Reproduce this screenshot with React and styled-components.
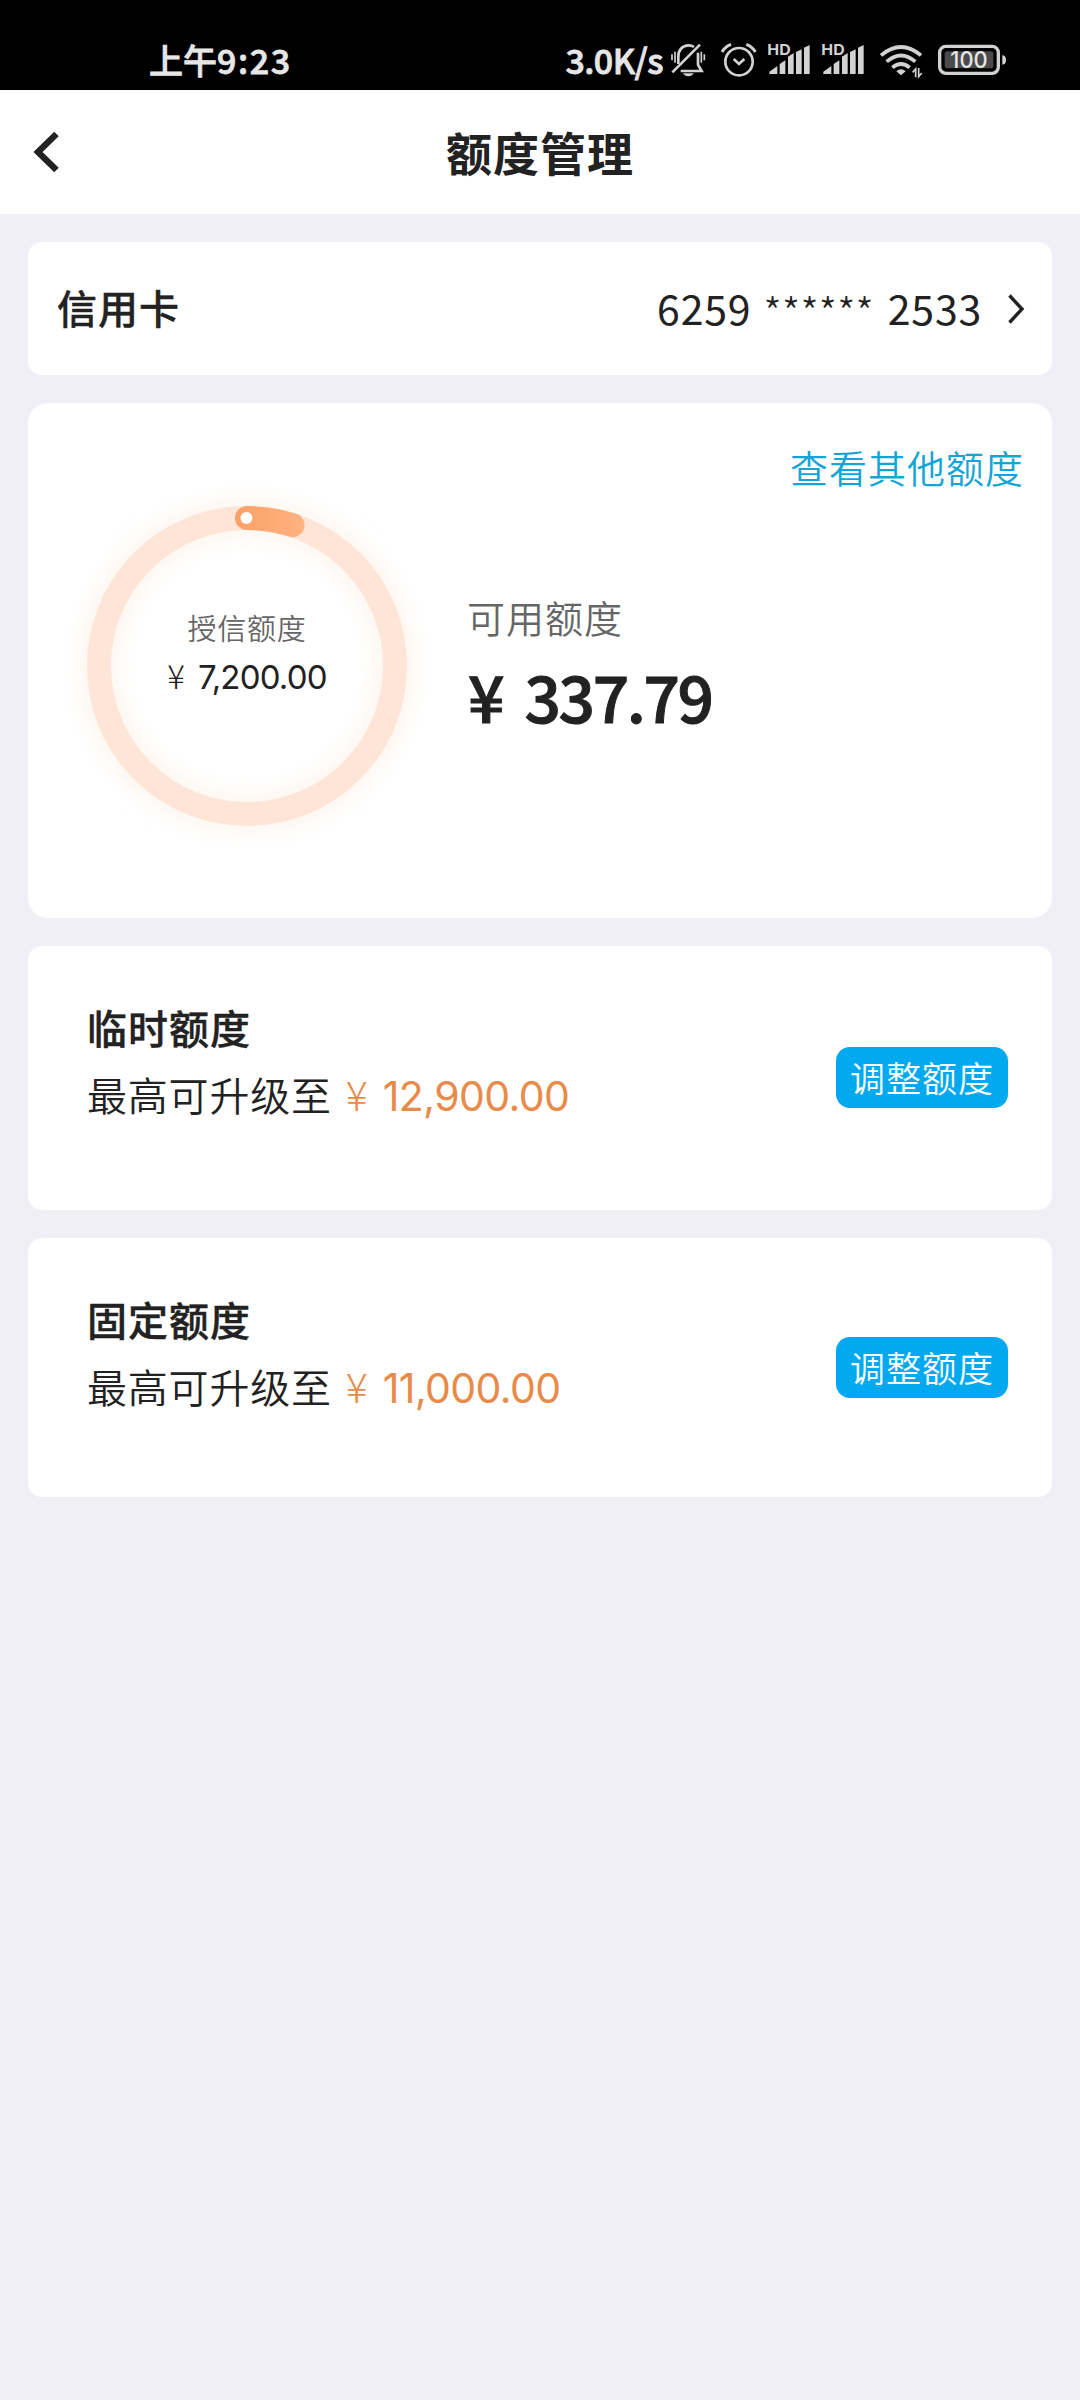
import React from 'react';
import styled, { createGlobalStyle } from 'styled-components';

const CJK = '"Noto Sans CJK SC", sans-serif';
const LATIN = 'Inter, "Noto Sans CJK SC", sans-serif';

const GlobalStyle = createGlobalStyle`
  *, *::before, *::after { box-sizing: border-box; }
  body { margin: 0; background: #efeff5; font-family: ${CJK}; color: #222; }
`;

const Screen = styled.div`
  width: 1080px;
  min-height: 2400px;
  background: #efeff5;
  display: flex;
  flex-direction: column;
`;

const StatusBar = styled.div`
  height: 90px;
  background: #000;
  color: #e6e6e6;
  display: flex;
  align-items: flex-start;
  justify-content: space-between;
  padding: 40px 74px 0 149px;
`;

const StatusText = styled.span`
  font-family: ${CJK};
  font-weight: 500;
  font-size: 34px;
  line-height: 39px;
  letter-spacing: ${(p) => p.$spacing || 0}px;
  -webkit-text-stroke: 0.8px currentColor;
  white-space: nowrap;
`;

const StatusTime = styled.div`
  display: flex;
`;

const StatusIcons = styled.div`
  display: flex;
  align-items: flex-start;
`;

const StatusIcon = styled.svg`
  display: block;
  flex: none;
  height: 40px;
  margin-left: ${(p) => p.$gap}px;
  overflow: visible;
`;

const NavBar = styled.header`
  height: 124px;
  background: #fff;
  display: grid;
  grid-template-columns: 120px 1fr 120px;
  align-items: center;
`;

const BackButton = styled.button`
  border: 0;
  background: none;
  padding: 0 0 0 30px;
  display: flex;
`;

const Title = styled.h1`
  margin: 0;
  font-size: 46px;
  line-height: 60px;
  font-weight: 700;
  letter-spacing: 1px;
  text-align: center;
  padding-bottom: 2px;
`;

const Content = styled.main`
  display: flex;
  flex-direction: column;
  gap: 28px;
  padding: 28px;
`;

const Card = styled.section`
  background: #fff;
  border-radius: ${(p) => p.$radius || 14}px;
  height: ${(p) => p.$height}px;
`;

const CardRow = styled(Card)`
  display: flex;
  align-items: center;
  justify-content: space-between;
  padding: 0 27px 3px 29px;
`;

const Label = styled.div`
  font-size: 40px;
  line-height: 56px;
  font-weight: 500;
  letter-spacing: 1px;
  -webkit-text-stroke: 0.4px currentColor;
`;

const CardNumber = styled.div`
  display: flex;
  align-items: center;
  font-size: 41px;
  line-height: 56px;
  font-weight: 400;
  white-space: nowrap;
`;

const Digits = styled.span`
  letter-spacing: 0.8px;
`;

const Mask = styled.span`
  font-size: 42px;
  font-weight: 300;
  letter-spacing: -0.2px;
  margin: 8px 14px 0 12px;
`;

const Chevron = styled.svg`
  display: block;
  margin: 3px 0 0 25px;
`;

const SummaryCard = styled(Card)`
  display: flex;
  flex-direction: column;
  padding: 36px 29px 0;
`;

const OtherLink = styled.a`
  align-self: flex-end;
  font-size: 38px;
  line-height: 56px;
  font-weight: 350;
  letter-spacing: 1px;
  margin-right: -1px;
  color: #14a5d6;
`;

const SummaryBody = styled.div`
  display: flex;
  margin-top: -19px;
`;

const Gauge = styled.div`
  width: 380px;
  height: 380px;
  display: grid;
  flex: none;
  & > * { grid-area: 1 / 1; }
`;

const GaugeText = styled.div`
  display: flex;
  flex-direction: column;
  align-items: center;
  padding-top: 130px;
`;

const GaugeLabel = styled.div`
  font-size: 29px;
  line-height: 42px;
  font-weight: 350;
  letter-spacing: 0.8px;
  color: #666;
`;

const GaugeAmount = styled.div`
  font-family: ${LATIN};
  font-size: 33px;
  line-height: 44px;
  font-weight: 400;
  letter-spacing: -0.8px;
  margin-top: 5px;
  display: flex;
  align-items: baseline;
`;

const Yen = styled.span`
  font-family: ${CJK};
  font-weight: ${(p) => p.$weight || 300};
  letter-spacing: 0;
  margin-right: ${(p) => p.$gap}px;
`;

const Available = styled.div`
  display: flex;
  flex-direction: column;
  padding: 113px 0 0 31px;
`;

const AvailableLabel = styled.div`
  font-size: 38px;
  line-height: 56px;
  font-weight: 350;
  letter-spacing: 1px;
  color: #666;
  margin-left: -1px;
`;

const AvailableAmount = styled.div`
  font-size: 64px;
  line-height: 76px;
  font-weight: 500;
  letter-spacing: -2.4px;
  -webkit-text-stroke: 1px currentColor;
  margin-top: 12px;
  display: flex;
  align-items: baseline;
`;

const QuotaCard = styled(Card)`
  display: flex;
  justify-content: space-between;
  align-items: flex-start;
  padding: 0 44px 0 59px;
`;

const QuotaInfo = styled.div`
  padding-top: 53px;
`;

const QuotaLine = styled.div`
  display: flex;
  align-items: baseline;
  margin-top: 10px;
  font-size: 40px;
  line-height: 56px;
  font-weight: 350;
  letter-spacing: 0.8px;
  white-space: nowrap;
`;

const QuotaAmount = styled.span`
  display: flex;
  align-items: baseline;
  font-family: ${LATIN};
  font-size: 41px;
  font-weight: 400;
  letter-spacing: -0.6px;
  color: #e88a48;
  margin-left: 14px;
`;

const AdjustButton = styled.button`
  border: 0;
  width: 172px;
  height: 61px;
  padding: 0;
  margin-top: ${(p) => p.$top}px;
  border-radius: 14px;
  background: #03a9f0;
  color: #fff;
  font-family: ${CJK};
  font-size: 35px;
  line-height: 56px;
  padding-bottom: 2px;
  font-weight: 350;
  letter-spacing: 1px;
  white-space: nowrap;
`;

const ICON = '#d2d2d2';

function BellOffIcon() {
  return (
    <StatusIcon $gap={8} width="34" viewBox="393 60 102 120" fill="none" stroke={ICON} strokeWidth="8">
      <path d="M415 132V110C415 90 427 76 446 76C453 76 458 78 462 81" />
      <path d="M474 98V134L485 153H422" />
      <path d="M397 157L480 74" strokeWidth="8" />
      <path d="M429 160H461Q456 169 445 169Q434 169 429 160Z" fill={ICON} stroke="none" />
      <path d="M405 95V128M396 103V121M484 95V128M493 103V121" strokeWidth="5" />
    </StatusIcon>
  );
}

function AlarmIcon() {
  return (
    <StatusIcon $gap={16} width="35" viewBox="543 60 105 120" fill="none" stroke={ICON} strokeWidth="8">
      <circle cx="597" cy="125" r="41" />
      <path d="M581 117L597 132L613 117" />
      <path d="M546 96Q554 81 573 73M646 96Q638 81 619 73" strokeWidth="9" />
    </StatusIcon>
  );
}

function SignalIcon({ gap }) {
  return (
    <StatusIcon $gap={gap} width="42" viewBox="686 60 126 120" fill={ICON}>
      <text x="684" y="105" fontFamily="Inter, sans-serif" fontWeight="700" fontSize="45" textLength="70" lengthAdjust="spacingAndGlyphs">HD</text>
      <path d="M690 162V155L714 138V162ZM721 162V132L738 121V162ZM746 162V110L763 99V162ZM770 162V96L787 88V162ZM794 162V83L811 75V162Z" />
    </StatusIcon>
  );
}

function WifiIcon() {
  return (
    <StatusIcon $gap={16} width="42" viewBox="1020 60 126 120" fill="none" stroke={ICON} strokeWidth="11">
      <path d="M1023 106Q1083 56 1143 106" />
      <path d="M1040 125Q1083 88 1126 125" />
      <path d="M1057 143Q1083 121 1109 143" />
      <path d="M1083 166L1069 154Q1083 142 1097 154Z" fill={ICON} stroke="none" />
      <path d="M1127 172V147L1118 157M1136 144V170L1145 159" strokeWidth="5" />
    </StatusIcon>
  );
}

function BatteryIcon() {
  return (
    <StatusIcon $gap={16} width="68" viewBox="1194 60 204 120">
      <rect x="1199" y="79" width="176" height="81" rx="19" fill="none" stroke={ICON} strokeWidth="10" />
      <rect x="1214" y="94" width="146" height="51" rx="8" fill="#4a4a4a" />
      <path d="M1387 106Q1398 106 1398 120Q1398 134 1387 134Z" fill={ICON} />
      <text x="1287" y="145" textAnchor="middle" fontFamily="Inter, sans-serif" fontWeight="500" fontSize="68" textLength="112" lengthAdjust="spacingAndGlyphs" fill="#e6e6e6">100</text>
    </StatusIcon>
  );
}

function QuotaGauge({ available, total }) {
  const c = 190;
  const r = 148;
  const angle = (available / total) * Math.PI * 2 + 0.018;
  const x = c + r * Math.sin(angle);
  const y = c - r * Math.cos(angle);
  return (
    <svg width="380" height="380" viewBox="0 0 380 380" fill="none">
      <defs>
        <linearGradient id="arc" x1="178" y1="0" x2="248" y2="0" gradientUnits="userSpaceOnUse">
          <stop offset="0" stopColor="#fba168" />
          <stop offset="1" stopColor="#ffb281" />
        </linearGradient>
        <filter id="glow" x="-20%" y="-20%" width="140%" height="140%">
          <feGaussianBlur stdDeviation="10" />
        </filter>
      </defs>
      <circle cx={c} cy={c} r={r} stroke="#ffeedd" strokeOpacity="0.5" strokeWidth="38" filter="url(#glow)" />
      <circle cx={c} cy={c} r={r} stroke="#ffe5d8" strokeWidth="24" />
      <path d={`M${c} ${c - r}A${r} ${r} 0 0 1 ${x} ${y}`} stroke="url(#arc)" strokeWidth="24" strokeLinecap="round" />
      <circle cx={c - 0.5} cy={c - r} r="6" fill="#fff" />
    </svg>
  );
}

function Quota({ name, amount, height, top }) {
  return (
    <QuotaCard $height={height}>
      <QuotaInfo>
        <Label>{name}</Label>
        <QuotaLine>
          最高可升级至
          <QuotaAmount>
            <Yen $gap={15}>¥</Yen>
            {amount}
          </QuotaAmount>
        </QuotaLine>
      </QuotaInfo>
      <AdjustButton $top={top}>调整额度</AdjustButton>
    </QuotaCard>
  );
}

export default function App() {
  return (
    <Screen>
      <GlobalStyle />
      <StatusBar>
        <StatusTime>
          <StatusText>上午</StatusText>
          <StatusText $spacing={1.6}>9:23</StatusText>
        </StatusTime>
        <StatusIcons>
          <StatusText $spacing={-0.6}>3.0K/s</StatusText>
          <BellOffIcon />
          <AlarmIcon />
          <SignalIcon gap={12} />
          <SignalIcon gap={12} />
          <WifiIcon />
          <BatteryIcon />
        </StatusIcons>
      </StatusBar>
      <NavBar>
        <BackButton aria-label="返回">
          <svg width="32" height="44" viewBox="0 0 32 44" fill="none" stroke="#222" strokeWidth="6.4">
            <path d="M26.5 4L8 22L26.5 40" />
          </svg>
        </BackButton>
        <Title>额度管理</Title>
      </NavBar>
      <Content>
        <CardRow $height={133}>
          <Label>信用卡</Label>
          <CardNumber>
            <Digits>6259</Digits>
            <Mask>******</Mask>
            <Digits>2533</Digits>
            <Chevron width="18" height="32" viewBox="0 0 18 32" fill="none" stroke="#222" strokeWidth="3.4">
              <path d="M2.5 2.5L15 16L2.5 29.5" />
            </Chevron>
          </CardNumber>
        </CardRow>
        <SummaryCard $height={515} $radius={20}>
          <OtherLink>查看其他额度</OtherLink>
          <SummaryBody>
            <Gauge>
              <QuotaGauge available={337.79} total={7200} />
              <GaugeText>
                <GaugeLabel>授信额度</GaugeLabel>
                <GaugeAmount>
                  <Yen $gap={13}>¥</Yen>7,200.00
                </GaugeAmount>
              </GaugeText>
            </Gauge>
            <Available>
              <AvailableLabel>可用额度</AvailableLabel>
              <AvailableAmount>
                <Yen $weight={500} $gap={20}>¥</Yen>337.79
              </AvailableAmount>
            </Available>
          </SummaryBody>
        </SummaryCard>
        <Quota name="临时额度" amount="12,900.00" height={264} top={101} />
        <Quota name="固定额度" amount="11,000.00" height={259} top={99} />
      </Content>
    </Screen>
  );
}
